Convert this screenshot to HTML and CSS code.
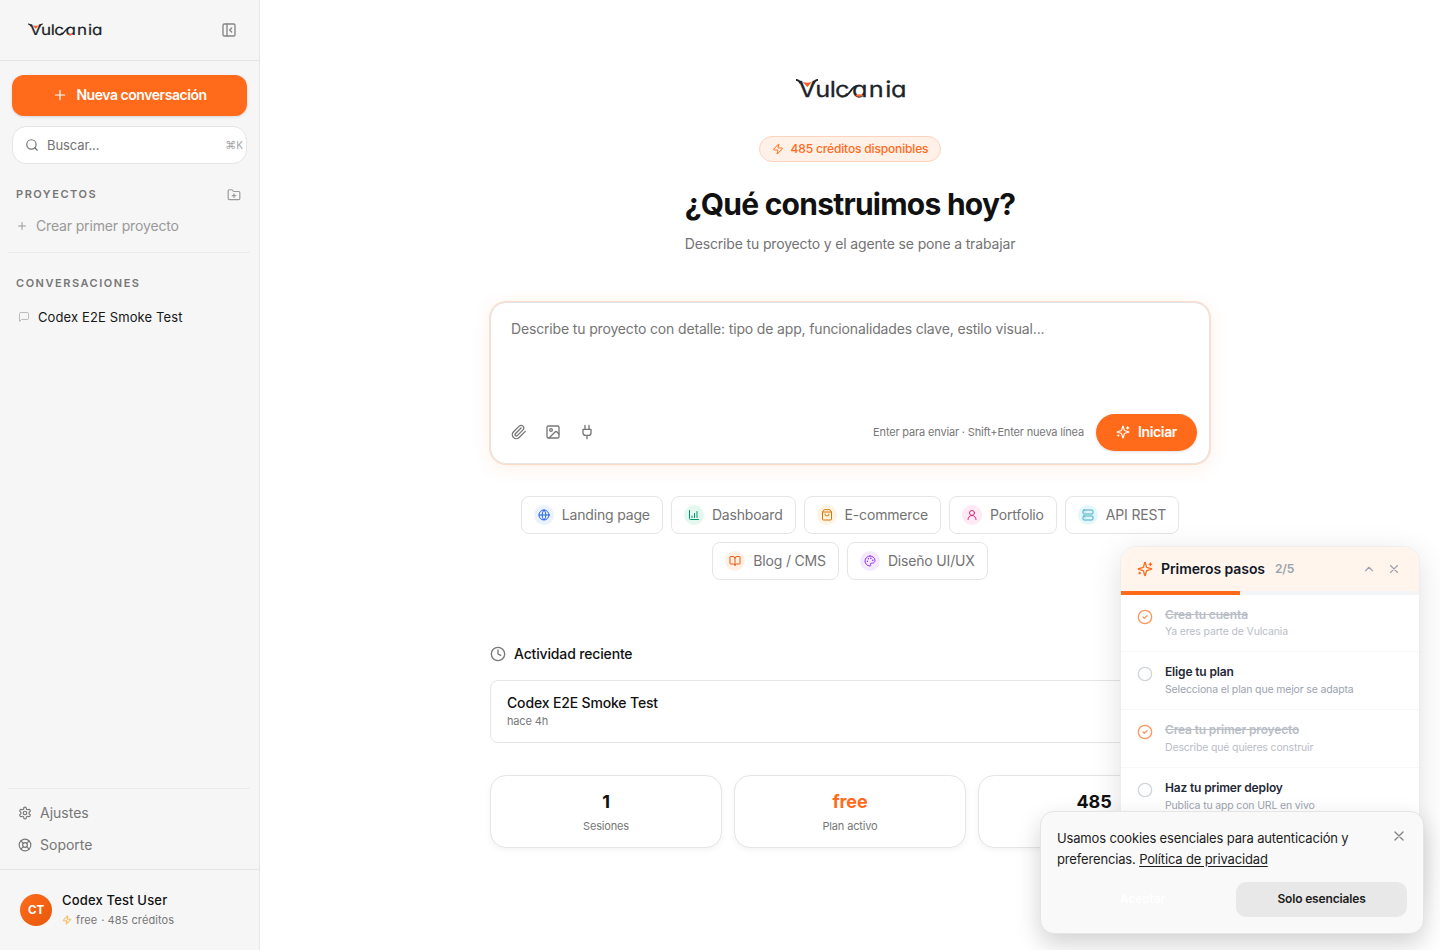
FILE: index.html
```html
<!DOCTYPE html>
<html lang="es">
<head>
<meta charset="utf-8">
<title>Vulcania</title>
<link rel="stylesheet" href="styles.css">
</head>
<body>
<svg width="0" height="0" class="defs">
  <symbol id="logo-accents" viewBox="0 0 110 20">
    <path d="M0 .9C2.500 .9 3.500 2 4.500 4.500M22 .9c-2.500 0-3.500 1.100-4.500 3.600M50.500 16.300C55 14 55.500 7.500 61 6.900" fill="none" stroke="#1c2329" stroke-width="1.900"/>
    <path d="M6.500 2.800q4.500 1.800 9.500 0L11.300 8z" fill="#ff5a26"/>
    <path d="M59.500 16.500q4-2.600 8 0-4 2.400-8 0z" fill="#ff6a33"/>
  </symbol>
  <symbol id="zap" viewBox="0 0 24 24"><path d="M4 14a1 1 0 0 1-.78-1.630l9.900-10.200a.5.5 0 0 1 .86.460l-1.920 6.020A1 1 0 0 0 13 10h7a1 1 0 0 1 .78 1.630l-9.900 10.200a.5.5 0 0 1-.86-.460l1.920-6.020A1 1 0 0 0 11 14z"/></symbol>
  <symbol id="plus" viewBox="0 0 24 24"><path d="M5 12h14M12 5v14"/></symbol>
  <symbol id="x" viewBox="0 0 24 24"><path d="M18 6 6 18M6 6l12 12"/></symbol>
  <symbol id="sparkles" viewBox="0 0 24 24"><path d="M9.937 15.500A2 2 0 0 0 8.500 14.063l-6.135-1.582a.5.5 0 0 1 0-.962L8.500 9.936A2 2 0 0 0 9.937 8.500l1.582-6.135a.5.5 0 0 1 .963 0L14.063 8.500A2 2 0 0 0 15.500 9.937l6.135 1.581a.5.5 0 0 1 0 .964L15.500 14.063a2 2 0 0 0-1.437 1.437l-1.582 6.135a.5.5 0 0 1-.963 0zM20 3v4M22 5h-4M4 17v2M5 18H3"/></symbol>
  <symbol id="done" viewBox="0 0 24 24"><circle cx="12" cy="12" r="10"/><path d="m9 12 2 2 4-4"/></symbol>
  <symbol id="circle" viewBox="0 0 24 24"><circle cx="12" cy="12" r="10"/></symbol>
</svg>
<div class="app">
  <aside class="sidebar">
    <header class="side-head">
      <svg class="logo-small" viewBox="0 0 110 20"><text class="word" transform="scale(1.15 1)" x="2.200 16.800 29.300 34 48.600 63.200 77.600 82.600" y="18">Vulcania</text><use href="#logo-accents"/></svg>
      <svg class="icon s16" viewBox="0 0 24 24"><rect x="3" y="3" width="18" height="18" rx="2"/><path d="M9 3v18M16 15l-3-3 3-3"/></svg>
    </header>
    <button class="new-chat"><svg class="icon s16"><use href="#plus"/></svg>Nueva conversación</button>
    <div class="search">
      <svg class="icon s14" viewBox="0 0 24 24"><circle cx="11" cy="11" r="8"/><path d="m21 21-4.300-4.300"/></svg>
      <span>Buscar...</span><kbd><span>⌘</span>K</kbd>
    </div>
    <div class="section projects"><span>PROYECTOS</span>
      <svg class="icon s14" viewBox="0 0 24 24"><path d="M12 10v6M9 13h6M20 20a2 2 0 0 0 2-2V8a2 2 0 0 0-2-2h-7.900a2 2 0 0 1-1.690-.9L9.600 3.900A2 2 0 0 0 7.930 3H4a2 2 0 0 0-2 2v13a2 2 0 0 0 2 2Z"/></svg>
    </div>
    <div class="create"><svg class="icon s12"><use href="#plus"/></svg>Crear primer proyecto</div>
    <div class="rule"></div>
    <div class="section talks"><span>CONVERSACIONES</span></div>
    <div class="talk"><svg class="icon s12" viewBox="0 0 24 24"><path d="M21 15a2 2 0 0 1-2 2H7l-4 4V5a2 2 0 0 1 2-2h14a2 2 0 0 1 2 2z"/></svg>Codex E2E Smoke Test</div>
    <nav class="side-nav">
      <a><svg class="icon s14" viewBox="0 0 24 24"><path d="M12.220 2h-.44a2 2 0 0 0-2 2v.18a2 2 0 0 1-1 1.730l-.43.25a2 2 0 0 1-2 0l-.15-.08a2 2 0 0 0-2.730.73l-.22.38a2 2 0 0 0 .73 2.730l.15.1a2 2 0 0 1 1 1.720v.51a2 2 0 0 1-1 1.740l-.15.09a2 2 0 0 0-.73 2.730l.22.38a2 2 0 0 0 2.730.73l.15-.08a2 2 0 0 1 2 0l.43.25a2 2 0 0 1 1 1.730V20a2 2 0 0 0 2 2h.44a2 2 0 0 0 2-2v-.18a2 2 0 0 1 1-1.730l.43-.25a2 2 0 0 1 2 0l.15.08a2 2 0 0 0 2.730-.73l.22-.39a2 2 0 0 0-.73-2.730l-.15-.08a2 2 0 0 1-1-1.740v-.5a2 2 0 0 1 1-1.740l.15-.09a2 2 0 0 0 .73-2.730l-.22-.38a2 2 0 0 0-2.730-.73l-.15.08a2 2 0 0 1-2 0l-.43-.25a2 2 0 0 1-1-1.730V4a2 2 0 0 0-2-2z"/><circle cx="12" cy="12" r="3"/></svg>Ajustes</a>
      <a><svg class="icon s14" viewBox="0 0 24 24"><circle cx="12" cy="12" r="10"/><circle cx="12" cy="12" r="4"/><path d="m4.930 4.930 4.240 4.240M14.830 9.170l4.240-4.240M14.830 14.830l4.240 4.240M9.170 14.830l-4.240 4.240"/></svg>Soporte</a>
    </nav>
    <footer class="user">
      <div class="avatar">CT</div>
      <div><div class="user-name">Codex Test User</div>
      <div class="user-plan"><svg class="icon s10"><use href="#zap"/></svg><span>free</span><span>· 485 créditos</span></div></div>
    </footer>
  </aside>
  <main class="main">
    <div class="column">
      <svg class="logo-big" viewBox="0 0 110 20"><text class="word" transform="scale(1.15 1)" x="2.200 16.800 29.300 34 48.600 63.200 77.600 82.600" y="18">Vulcania</text><use href="#logo-accents"/></svg>
      <div class="credits"><svg class="icon s12"><use href="#zap"/></svg>485 créditos disponibles</div>
      <h1>¿Qué construimos hoy?</h1>
      <p class="lead">Describe tu proyecto y el agente se pone a trabajar</p>
      <section class="composer">
        <div class="placeholder">Describe tu proyecto con detalle: tipo de app, funcionalidades clave, estilo visual...</div>
        <div class="tools">
          <svg class="icon s16" viewBox="0 0 24 24"><path d="m21.440 11.050-9.190 9.190a6 6 0 0 1-8.490-8.490l8.570-8.570A4 4 0 1 1 18 8.840l-8.590 8.570a2 2 0 0 1-2.830-2.830l8.490-8.480"/></svg>
          <svg class="icon s16" viewBox="0 0 24 24"><rect x="3" y="3" width="18" height="18" rx="2"/><circle cx="9" cy="9" r="2"/><path d="m21 15-3.086-3.086a2 2 0 0 0-2.828 0L6 21"/></svg>
          <svg class="icon s16" viewBox="0 0 24 24"><path d="M12 22v-5M9 8V2M15 8V2M18 8v5a4 4 0 0 1-4 4h-4a4 4 0 0 1-4-4V8Z"/></svg>
          <span class="hint">Enter para enviar · Shift+Enter nueva línea</span>
          <button class="start"><svg class="icon s14"><use href="#sparkles"/></svg>Iniciar</button>
        </div>
      </section>
      <div class="chips">
        <span class="chip"><i class="blue"><svg class="icon s12" viewBox="0 0 24 24"><circle cx="12" cy="12" r="10"/><path d="M12 2a14.500 14.500 0 0 0 0 20 14.500 14.500 0 0 0 0-20M2 12h20"/></svg></i>Landing page</span>
        <span class="chip"><i class="green"><svg class="icon s12" viewBox="0 0 24 24"><path d="M3 3v16a2 2 0 0 0 2 2h16M8 17v-3M13 17V9M18 17V5"/></svg></i>Dashboard</span>
        <span class="chip"><i class="amber"><svg class="icon s12" viewBox="0 0 24 24"><path d="M6 2 3 6v14a2 2 0 0 0 2 2h14a2 2 0 0 0 2-2V6l-3-4ZM3 6h18M16 10a4 4 0 0 1-8 0"/></svg></i>E-commerce</span>
        <span class="chip"><i class="pink"><svg class="icon s12" viewBox="0 0 24 24"><circle cx="12" cy="8" r="5"/><path d="M20 21a8 8 0 0 0-16 0"/></svg></i>Portfolio</span>
        <span class="chip"><i class="cyan"><svg class="icon s12" viewBox="0 0 24 24"><rect x="2" y="2" width="20" height="8" rx="2"/><rect x="2" y="14" width="20" height="8" rx="2"/><path d="M6 6h.01M6 18h.01"/></svg></i>API REST</span>
        <span class="chip"><i class="orange"><svg class="icon s12" viewBox="0 0 24 24"><path d="M12 7v14M3 18a1 1 0 0 1-1-1V4a1 1 0 0 1 1-1h5a4 4 0 0 1 4 4 4 4 0 0 1 4-4h5a1 1 0 0 1 1 1v13a1 1 0 0 1-1 1h-6a3 3 0 0 0-3 3 3 3 0 0 0-3-3z"/></svg></i>Blog / CMS</span>
        <span class="chip"><i class="violet"><svg class="icon s12" viewBox="0 0 24 24"><circle cx="13.500" cy="6.500" r=".5"/><circle cx="17.500" cy="10.500" r=".5"/><circle cx="8.500" cy="7.500" r=".5"/><circle cx="6.500" cy="12.500" r=".5"/><path d="M12 2C6.500 2 2 6.500 2 12s4.500 10 10 10c.926 0 1.648-.746 1.648-1.688 0-.437-.18-.835-.437-1.125-.29-.289-.438-.652-.438-1.125a1.640 1.640 0 0 1 1.668-1.668h1.996c3.051 0 5.555-2.503 5.555-5.554C21.965 6.012 17.461 2 12 2z"/></svg></i>Diseño UI/UX</span>
      </div>
      <h2><svg class="icon s16" viewBox="0 0 24 24"><circle cx="12" cy="12" r="10"/><path d="M12 6v6l4 2"/></svg>Actividad reciente</h2>
      <div class="recent"><div class="recent-title">Codex E2E Smoke Test</div><div class="recent-time">hace 4h</div></div>
      <div class="stats">
        <div class="stat"><strong>1</strong><span>Sesiones</span></div>
        <div class="stat accent"><strong>free</strong><span>Plan activo</span></div>
        <div class="stat"><strong>485</strong></div>
      </div>
    </div>
  </main>
</div>
<section class="steps">
  <header class="steps-head">
    <svg class="icon s16 spark"><use href="#sparkles"/></svg><b>Primeros pasos</b><span>2/5</span>
    <svg class="icon s14 up" viewBox="0 0 24 24"><path d="m18 15-6-6-6 6"/></svg><svg class="icon s14"><use href="#x"/></svg>
  </header>
  <div class="progress"><div></div></div>
  <div class="step first is-done"><svg class="icon s16"><use href="#done"/></svg><div><b>Crea tu cuenta</b><p>Ya eres parte de Vulcania</p></div></div>
  <div class="step"><svg class="icon s16"><use href="#circle"/></svg><div><b>Elige tu plan</b><p>Selecciona el plan que mejor se adapta</p></div></div>
  <div class="step is-done"><svg class="icon s16"><use href="#done"/></svg><div><b>Crea tu primer proyecto</b><p>Describe qué quieres construir</p></div></div>
  <div class="step"><svg class="icon s16"><use href="#circle"/></svg><div><b>Haz tu primer deploy</b><p>Publica tu app con URL en vivo</p></div></div>
</section>
<section class="cookies">
  <div class="cookie-copy"><p>Usamos cookies esenciales para autenticación y preferencias. <a>Política de privacidad</a></p><svg class="icon s16"><use href="#x"/></svg></div>
  <div class="cookie-actions"><button class="accept">Aceptar</button><button class="essential">Solo esenciales</button></div>
</section>
</body>
</html>
```
FILE: styles.css
```css
* { box-sizing: border-box; }
body { margin: 0; font: 14px/20px Inter, "Liberation Sans", sans-serif; letter-spacing: -.155px; color: #111; background: #fff; height: 950px; overflow: hidden; }
p, h1, h2 { margin: 0; }
button { border: 0; font: inherit; letter-spacing: inherit; display: flex; align-items: center; justify-content: center; padding: 0; }
.defs { position: absolute; }
.icon { fill: none; stroke: currentColor; stroke-width: 2; stroke-linecap: round; stroke-linejoin: round; flex: none; display: block; }
.s10 { width: 10px; height: 10px; }
.s12 { width: 12px; height: 12px; }
.s14 { width: 14px; height: 14px; }
.s16 { width: 16px; height: 16px; }
.word { font-family: Inter, sans-serif; font-size: 22px; font-weight: 400; letter-spacing: 0; font-feature-settings: "cv11"; fill: #1c2329; stroke: #1c2329; stroke-width: .3px; text-rendering: geometricPrecision; }

.app { display: flex; height: 950px; }
.sidebar { width: 260px; flex: none; background: #f6f6f6; border-right: 1px solid #e5e5e5; display: flex; flex-direction: column; }
.side-head { height: 61px; border-bottom: 1px solid #e5e5e5; padding: 0 22px 0 28px; display: flex; align-items: center; justify-content: space-between; color: #858585; }
.logo-small { width: 74px; height: 14px; overflow: visible; }
.new-chat { margin: 14px 12px 0; padding-bottom: 1px; height: 41px; border-radius: 12px; background: #ff6b1a; color: #fff; font-weight: 600; gap: 8px; letter-spacing: -.45px; box-shadow: 0 1px 3px rgba(0,0,0,.12); }
.new-chat .icon { stroke-width: 1.8; }
.search { margin: 10px 12px 0; height: 38px; border: 1px solid #e5e5e5; border-radius: 14px; background: #fff; display: flex; align-items: center; padding: 0 3px 0 12px; gap: 8px; font-size: 13px; letter-spacing: -.1px; color: #737373; }
.search kbd { margin-left: auto; font: 10px/14px Inter, sans-serif; letter-spacing: 0; color: #a5a5a5; }
.search kbd span { font-family: "DejaVu Sans", sans-serif; font-size: 11px; }
.section { display: flex; justify-content: space-between; align-items: center; padding: 0 18px 0 16px; height: 16px; font-size: 11px; font-weight: 600; letter-spacing: 1.53px; color: #777; }
.projects { margin-top: 22px; }
.projects .icon { color: #999; position: relative; top: 1px; }
.create { display: flex; align-items: center; gap: 8px; height: 20px; margin: 14px 0 0 16px; color: #999; }
.rule { height: 1px; background: #ebebeb; margin: 16px 9px 0 8px; }
.talks { margin-top: 22px; }
.talk { margin: 16px 0 0 18px; height: 20px; display: flex; align-items: center; gap: 8px; font-size: 13px; letter-spacing: .12px; color: #171717; }
.talk .icon { color: #bbb; }
.side-nav { margin: auto 9px 0 8px; height: 81px; border-top: 1px solid #ebebeb; padding-top: 8px; color: #777; letter-spacing: 0; }
.side-nav a { height: 32px; display: flex; align-items: center; gap: 8px; padding-left: 10px; }
.user { height: 81px; border-top: 1px solid #e5e5e5; padding-left: 20px; display: flex; align-items: center; gap: 10px; letter-spacing: .07px; }
.avatar { width: 32px; height: 32px; border-radius: 50%; background: linear-gradient(135deg, #ff6b1a, #e8590c); color: #fff; font-size: 11.5px; letter-spacing: -.1px; font-weight: 700; display: grid; place-items: center; }
.user-name { font-size: 13px; font-weight: 500; line-height: 18px; padding-bottom: 2px; letter-spacing: .17px; }
.user-plan { font-size: 11px; color: #777; display: flex; gap: 4px; align-items: center; line-height: 19px; }
.user-plan .icon { color: #ffa21f; }

.main { flex: 1; }
.column { width: 720px; margin: 0 auto; padding-top: 79px; display: flex; flex-direction: column; align-items: center; }
.logo-big { width: 110px; height: 20px; margin-left: 2px; overflow: visible; }
.credits { margin-top: 37px; height: 26px; border: 1px solid #ffd3bd; border-radius: 13px; background: #fff0e8; color: #ff6b1a; font-size: 12px; font-weight: 500; padding: 0 12px; display: flex; align-items: center; gap: 7px; }
h1 { margin-top: 22px; font-size: 30px; line-height: 40px; font-weight: 700; letter-spacing: -.75px; }
.lead { margin-top: 10px; color: #737373; }
.composer { margin-top: 48px; width: 720px; height: 162px; border: 1px solid #e5e5e5; border-radius: 16px; background: #fff; padding: 15px 12px 12px 20px; box-shadow: 0 0 0 1px rgba(255,107,26,.2), 0 4px 20px rgba(255,107,26,.1); display: flex; flex-direction: column; justify-content: space-between; }
.placeholder { color: #757575; line-height: 22px; }
.tools { display: flex; align-items: center; gap: 18px; color: #777; }
.tools > .icon { margin-bottom: 2px; }
.hint { margin: 0 -6px 2px auto; font-size: 11px; letter-spacing: -.163px; }
.start { width: 101px; height: 37px; padding-bottom: 1px; border-radius: 19px; color: #fff; background: #ff6b1a; font-weight: 600; gap: 8px; letter-spacing: -.35px; box-shadow: 0 1px 3px rgba(0,0,0,.12); }
.chips { margin-top: 32px; width: 690px; display: flex; justify-content: center; flex-wrap: wrap; gap: 8px; }
.chip { height: 38px; border: 1px solid #e5e5e5; border-radius: 8px; padding: 0 12px; display: flex; align-items: center; gap: 8px; color: #737373; letter-spacing: -.17px; }
.chip i { width: 20px; height: 20px; border-radius: 50%; display: grid; place-items: center; }
.blue { color: #2563eb; background: #eaf2ff; }
.green { color: #059669; background: #e4f8f0; }
.amber { color: #d97706; background: #fff3e2; }
.pink { color: #db2777; background: #ffe9f4; }
.cyan { color: #40abc8; background: #e4f8fc; }
.orange { color: #ea580c; background: #fff0e6; }
.violet { color: #9333ea; background: #f4eaff; }
h2 { margin-top: 64px; align-self: stretch; height: 20px; font-size: 14px; line-height: 20px; font-weight: 500; display: flex; align-items: center; gap: 8px; }
h2 .icon { color: #777; }
.recent { margin-top: 16px; align-self: stretch; height: 63px; border: 1px solid #e5e5e5; border-radius: 8px; padding: 12px 16px; }
.recent-title { font-weight: 500; line-height: 20px; }
.recent-time { font-size: 11px; line-height: 16px; color: #777; }
.stats { margin-top: 32px; align-self: stretch; display: grid; grid-template-columns: repeat(3, 1fr); gap: 12px; }
.stat { height: 73px; border: 1px solid #e5e5e5; border-radius: 16px; padding-top: 12px; text-align: center; background: #fff; box-shadow: 0 2px 6px rgba(0,0,0,.05); }
.stat strong { display: block; font-size: 18px; line-height: 28px; font-weight: 700; letter-spacing: -.1px; }
.stat span { display: block; font-size: 11px; line-height: 16px; margin-top: 2px; color: #777; }
.accent strong { color: #ff6b1a; }

.steps { position: absolute; left: 1120px; top: 546px; width: 300px; height: 350px; border: 1px solid #eceef0; border-radius: 16px; background: #fff; overflow: hidden; box-shadow: 0 8px 32px rgba(0,0,0,.12); }
.steps-head { height: 44px; background: #fff5ec; padding: 0 18px 0 16px; display: flex; align-items: center; color: #9ca3af; }
.spark { color: #ff6b1a; }
.steps-head b { font-size: 14px; font-weight: 600; color: #111827; margin: 0 10px 0 8px; letter-spacing: -.08px; }
.steps-head span { font-size: 12px; font-weight: 600; }
.up { margin: 0 11px 0 auto; }
.progress { height: 4px; background: #f3f4f6; }
.progress div { width: 40%; height: 4px; background: #ff6b1a; }
.step { height: 58px; border-bottom: 1px solid #f6f7f8; padding: 11px 16px; display: flex; gap: 12px; color: #d1d5db; }
.step .icon { margin-top: 3px; }
.step b { display: block; font-size: 12px; line-height: 17px; font-weight: 600; color: #1f2937; }
.step p { font-size: 10.5px; line-height: 16px; margin-top: 2px; color: #9ca3af; }
.first { height: 57px; }
.first p { margin-top: 1px; }
.is-done > * { opacity: .7; }
.is-done .icon { color: #ff6b1a; }
.is-done b { color: #9ca3af; text-decoration: line-through; }

.cookies { position: absolute; left: 1040px; top: 811px; width: 384px; height: 123px; border: 1px solid #e5e5e5; border-radius: 14px; background: #f9f9f9; padding: 16px; box-shadow: 0 10px 25px rgba(0,0,0,.18); }
.cookie-copy { display: flex; justify-content: space-between; color: #858585; }
.cookie-copy p { width: 310px; font-size: 13px; line-height: 21px; color: #1c1c1c; }
.cookie-copy a { text-decoration: underline; text-underline-offset: 2px; }
.cookie-actions { display: grid; grid-template-columns: 1fr 1fr; gap: 8px; margin-top: 12px; }
.cookie-actions button { height: 35px; padding-bottom: 1px; border-radius: 10px; font-size: 12px; font-weight: 600; }
.accept { color: #fff; background: transparent; }
.essential { background: #e8e8e8; color: #1c1c1c; }
```
